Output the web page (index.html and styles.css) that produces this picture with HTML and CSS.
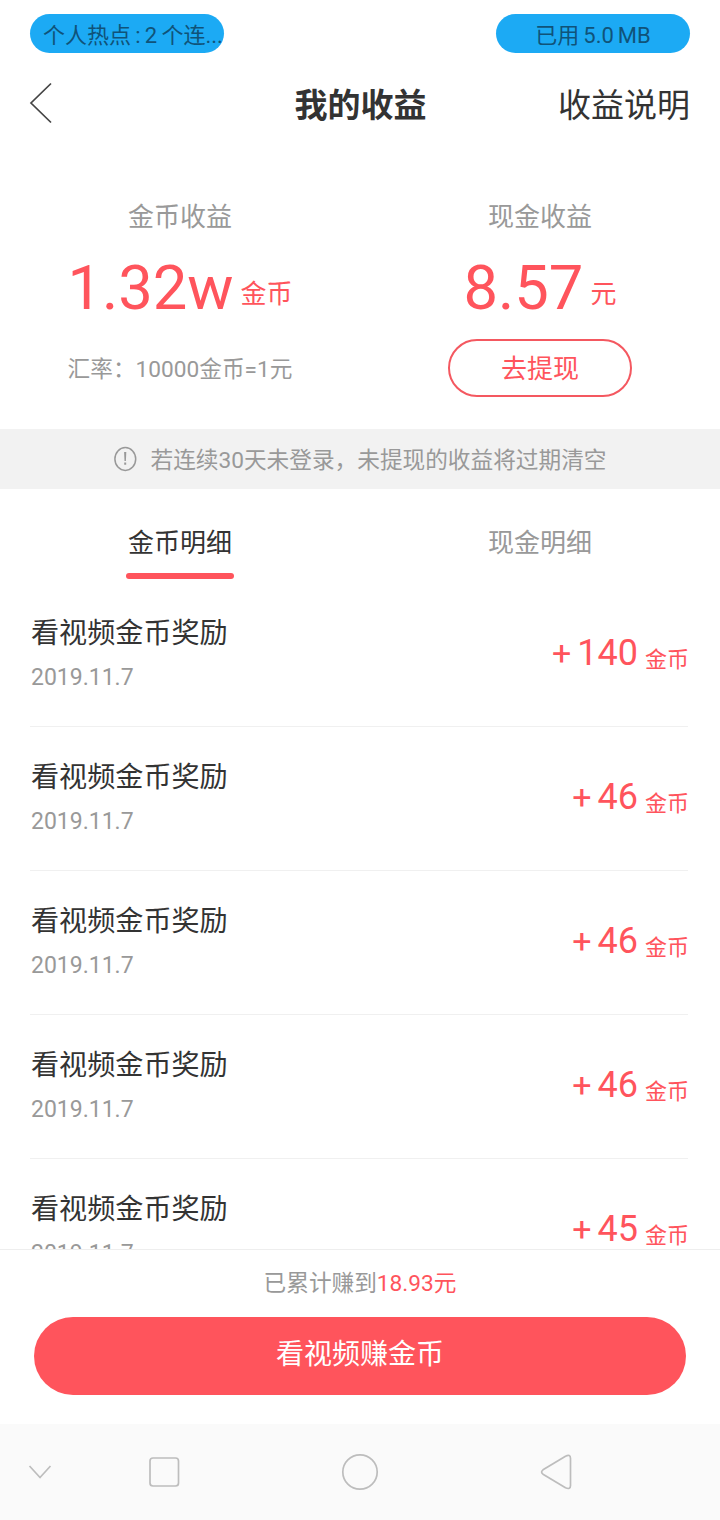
FILE: index.html
```html
<!DOCTYPE html>
<html lang="zh-CN">
<head>
<meta charset="utf-8">
<title>我的收益</title>
<link rel="stylesheet" href="styles.css">
</head>
<body>
<div class="screen">
  <div class="status">
    <div class="pill pill-left">个人热点 : 2 个连...</div>
    <div class="pill">已用 5.0 MB</div>
  </div>
  <header class="header">
    <svg class="back" width="24" height="42" viewBox="0 0 24 42"><path d="M22 1.500 2 21 22 40.500" fill="none" stroke="#444" stroke-width="1.700"/></svg>
    <h1 class="title">我的收益</h1>
    <a class="help">收益说明</a>
  </header>
  <section class="summary">
    <div class="account">
      <div class="label">金币收益</div>
      <div class="value"><span class="number">1.32w</span><span class="unit">金币</span></div>
      <div class="rate">汇率：10000金币=1元</div>
    </div>
    <div class="account">
      <div class="label">现金收益</div>
      <div class="value"><span class="number">8.57</span><span class="unit">元</span></div>
      <button class="withdraw">去提现</button>
    </div>
  </section>
  <div class="notice">
    <svg width="24" height="26" viewBox="0 0 24 26"><ellipse cx="11.300" cy="13" rx="10.400" ry="11.400" fill="none" stroke="#999" stroke-width="1.500"/><path d="M10.100 6h2.200l-.4 9h-1.400zM10.200 16.500h2v2.200h-2z" fill="#999"/></svg>
    <span>若连续30天未登录，未提现的收益将过期清空</span>
  </div>
  <nav class="tabs">
    <div class="tab tab-active"><span>金币明细</span></div>
    <div class="tab"><span>现金明细</span></div>
  </nav>
  <main class="list">
    <div class="item"><div class="info"><div class="name">看视频金币奖励</div><div class="date">2019.11.7</div></div><div class="amount"><span class="plus">+</span><span class="count">140</span><span class="coin">金币</span></div></div>
    <div class="item"><div class="info"><div class="name">看视频金币奖励</div><div class="date">2019.11.7</div></div><div class="amount"><span class="plus">+</span><span class="count">46</span><span class="coin">金币</span></div></div>
    <div class="item"><div class="info"><div class="name">看视频金币奖励</div><div class="date">2019.11.7</div></div><div class="amount"><span class="plus">+</span><span class="count">46</span><span class="coin">金币</span></div></div>
    <div class="item"><div class="info"><div class="name">看视频金币奖励</div><div class="date">2019.11.7</div></div><div class="amount"><span class="plus">+</span><span class="count">46</span><span class="coin">金币</span></div></div>
    <div class="item"><div class="info"><div class="name">看视频金币奖励</div><div class="date">2019.11.7</div></div><div class="amount"><span class="plus">+</span><span class="count">45</span><span class="coin">金币</span></div></div>
  </main>
  <footer class="footer">
    <div class="total">已累计赚到<span class="total-value">18.93元</span></div>
    <button class="watch">看视频赚金币</button>
  </footer>
  <div class="navbar">
    <svg width="720" height="96" viewBox="0 0 720 96" fill="none" stroke="#bdbdbd" stroke-width="1.700" stroke-linejoin="round">
      <path d="M29.500 42 40 53.500 50.500 42"/>
      <rect x="150" y="34" width="28.500" height="28" rx="3"/>
      <circle cx="360" cy="48" r="17.200"/>
      <path d="M543 45.800 565.500 32.200Q570.500 29.800 570.500 34.500V61.500Q570.500 66 565.500 63.800L543 50.200Q540.200 48 543 45.800Z"/>
    </svg>
  </div>
</div>
</body>
</html>
```
FILE: styles.css
```css
* { box-sizing: border-box; }
body {
  margin: 0;
  background: #fff;
  font-family: Roboto, "Noto Sans CJK SC", sans-serif;
  color: #333;
}
.screen {
  width: 720px;
  height: 1520px;
  display: flex;
  flex-direction: column;
  overflow: hidden;
}
.status {
  height: 67px;
  flex: none;
  display: flex;
  justify-content: space-between;
  padding: 14px 30px 0;
}
.pill {
  width: 194px;
  height: 39px;
  border-radius: 20px;
  background: #1caaf4;
  color: #105379;
  font-size: 22px;
  line-height: 43px;
  word-spacing: -1.5px;
  text-align: center;
  white-space: nowrap;
}
.pill-left { text-align: left; padding-left: 13px; word-spacing: -1.2px; }
.header {
  height: 74px;
  flex: none;
  display: grid;
  grid-template-columns: 1fr auto 1fr;
  align-items: center;
  padding: 0 30px;
}
.back { margin-left: -1px; margin-top: -2px; }
.title { margin: 0; padding: 4px 0 0 1px; font-size: 33px; font-weight: 700; line-height: 48px; }
.help { justify-self: end; padding-top: 4px; font-size: 33px; line-height: 48px; }
.summary {
  height: 288px;
  flex: none;
  display: grid;
  grid-template-columns: 1fr 1fr;
  padding-top: 56px;
}
.account { display: flex; flex-direction: column; align-items: center; }
.label { font-size: 26px; line-height: 40px; color: #999; }
.value {
  height: 101px;
  display: flex;
  align-items: center;
  color: #ff545c;
}
.number { font-size: 61.5px; line-height: 102px; }
.unit { font-size: 26px; line-height: 40px; margin: 13px 0 0 7px; }
.rate { font-size: 22.66px; line-height: 64px; color: #999; }
.withdraw {
  width: 184px;
  height: 58px;
  margin-top: 1px;
  padding: 2px 0 0;
  border: 2px solid #f45860;
  border-radius: 29px;
  background: #fff;
  color: #ff545c;
  font: 26px/52px Roboto, "Noto Sans CJK SC", sans-serif;
}
.notice {
  height: 60px;
  flex: none;
  display: flex;
  align-items: center;
  justify-content: center;
  gap: 13px;
  background: #f2f2f2;
  color: #999;
  font-size: 22.66px;
}
.notice span { line-height: 63px; height: 60px; }
.tabs { height: 94px; flex: none; display: grid; grid-template-columns: 1fr 1fr; }
.tab {
  display: flex;
  justify-content: center;
  color: #999;
  font-size: 26px;
  line-height: 108px;
}
.tab-active { color: #333; }
.tab-active span {
  height: 90px;
  width: 108px;
  text-align: center;
  position: relative;
}
.tab-active span::after {
  content: "";
  position: absolute;
  left: 0;
  bottom: 0;
  width: 108px;
  height: 6px;
  border-radius: 3px;
  background: #ff545c;
}
.list { flex: 1; min-height: 0; overflow: hidden; padding: 0 32px 0 30px; }
.item {
  height: 144px;
  display: flex;
  justify-content: space-between;
  border-bottom: 1px solid #f0f0f0;
  padding-left: 1px;
}
.name { margin-top: 30px; font-size: 28.1px; line-height: 42px; }
.date { margin-top: 8px; font-size: 23px; line-height: 30px; color: #999; }
.amount { height: 139px; display: flex; align-items: center; margin-right: -1px; color: #ff545c; }
.plus { font-size: 34px; margin-right: 6px; }
.count { font-size: 36px; }
.coin { font-size: 22px; line-height: 32px; margin: 14px 0 0 7px; }
.footer {
  height: 175px;
  flex: none;
  border-top: 1px solid #eee;
  display: flex;
  flex-direction: column;
  align-items: center;
  padding-top: 14px;
}
.total { font-size: 22.66px; line-height: 40px; color: #999; }
.total-value { color: #ff545c; }
.watch {
  width: 652px;
  height: 78px;
  margin-top: 13px;
  padding: 0 0 2px;
  border: 0;
  border-radius: 39px;
  background: #ff545c;
  color: #fff;
  font: 28px/76px Roboto, "Noto Sans CJK SC", sans-serif;
}
.navbar { height: 96px; flex: none; background: #fafafa; }
.navbar svg { display: block; }
```
